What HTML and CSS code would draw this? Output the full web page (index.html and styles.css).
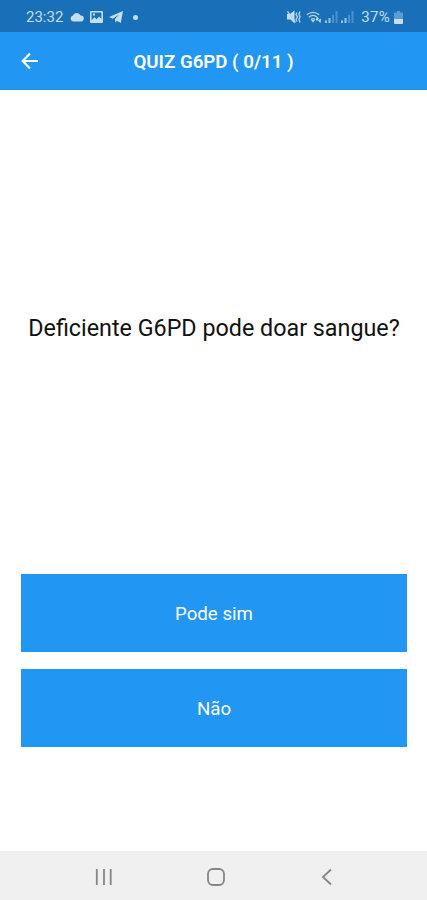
FILE: index.html
```
<!DOCTYPE html>
<html lang="pt-BR">
<head>
    <meta charset="UTF-8">
    <meta name="viewport" content="width=device-width, initial-scale=1.0">
    <title>Quiz G6PD</title>
    <link rel="stylesheet" href="styles.css">
</head>
<body>

    <div class="status-bar">
        <span class="clock">23:32</span>
        <svg class="cloud" width="14" height="10" viewBox="0 0 14 10">
            <path d="M3 9.500a3 3 0 0 1-.3-5.800A4.300 4.300 0 0 1 10.600 3.500 3 3 0 0 1 11 9.500z"/>
        </svg>
        <svg class="photo" width="13" height="12" viewBox="0 0 13 12">
            <path fill-rule="evenodd" d="M1 0h11a1 1 0 0 1 1 1v10a1 1 0 0 1-1 1H1a1 1 0 0 1-1-1V1a1 1 0 0 1 1-1zM1.600 1.600v7.600l2.800-3 2.200 2 2.600-2.700 2.200 2.500V1.600z"/>
            <path d="M3 2.500h2v2H3z"/>
        </svg>
        <svg class="telegram" width="14" height="12" viewBox="0 0 14 12">
            <path d="M14 0 0 6l3.800 1.800L10 3.500 6 8v3.500l1.800-1.700 4 2.200z"/>
        </svg>
        <span class="dot"></span>

        <div class="status-right">
            <svg class="mute" width="14" height="14" viewBox="0 0 14 14">
                <path d="M0 4h3l4.500-3.500v13L3.500 9.500H0z"/>
                <path class="line" d="M.5 1.500 8.500 12.500M10 2.500l-1 2 1.500 2.500-1.500 2.500 1 2M13 1.500l-1 2.500 1 3-1 2.500 1 3"/>
            </svg>
            <svg class="wifi" width="16" height="13" viewBox="0 0 16 13">
                <path class="line" d="M.8 3.800q6-5 12.400 0M2.800 6.200q4.200-3.500 8.400 0M5 8.500q2-1.700 4 0"/>
                <path d="M5 9h4l-2 2.500zM9.500 8.500l2-2.500 1.500 1.500-2 2.500zM12 9.500l3-2-.5 4.500z"/>
            </svg>
            <svg class="signal" width="13" height="12" viewBox="0 0 13 12">
                <path d="M0 9.500h2V12H0zM3.500 7h2v5h-2z"/>
                <path class="faint" d="M7 4h2v8H7zM10.500 0h2v12h-2z"/>
            </svg>
            <svg class="signal" width="13" height="12" viewBox="0 0 13 12">
                <path d="M0 9.500h2V12H0zM3.500 7h2v5h-2z"/>
                <path class="faint" d="M7 4h2v8H7zM10.500 0h2v12h-2z"/>
            </svg>
            <span class="percent">37%</span>
            <svg class="battery" width="9" height="13" viewBox="0 0 9 13">
                <path class="faint" d="M3 0h3v1.500h2a1 1 0 0 1 1 1V8H0V2.500a1 1 0 0 1 1-1h2z"/>
                <path d="M0 8h9v4a1 1 0 0 1-1 1H1a1 1 0 0 1-1-1z"/>
            </svg>
        </div>
    </div>

    <header class="app-bar">
        <button class="back-btn" aria-label="Voltar">
            <svg width="18" height="18" viewBox="0 0 18 18">
                <path d="M17 9H2M9 1.500 1.700 9 9 16.500"/>
            </svg>
        </button>
        <h1>QUIZ G6PD ( 0/11 )</h1>
    </header>

    <main>
        <p class="question">Deficiente G6PD pode doar sangue?</p>
        <div class="answers">
            <button class="answer-btn">Pode sim</button>
            <button class="answer-btn">Não</button>
        </div>
    </main>

    <nav class="nav-bar">
        <svg width="18" height="18" viewBox="0 0 18 18">
            <path d="M1.800 1v16M9 1v16M15.700 1v16"/>
        </svg>
        <svg width="18" height="18" viewBox="0 0 18 18">
            <rect x="1" y="1" width="16" height="16" rx="5"/>
        </svg>
        <svg width="18" height="18" viewBox="0 0 18 18">
            <path d="M13 1.500 5 9l8 7.500"/>
        </svg>
    </nav>

</body>
</html>
```
FILE: styles.css
```
* {
    box-sizing: border-box;
}
body {
    margin: 0;
    height: 900px;
    display: flex;
    flex-direction: column;
    font-family: Roboto, sans-serif;
    background-color: #fff;
}
button {
    border: none;
    padding: 0;
    font-family: inherit;
    color: white;
    cursor: pointer;
}
.status-bar {
    height: 32px;
    padding: 2px 24px 0 26px;
    display: flex;
    align-items: center;
    background-color: #1a70b8;
    color: #c3dff5;
    font-size: 15px;
}
.status-bar svg {
    fill: #c3dff5;
}
.status-bar .line {
    fill: none;
    stroke: #b4d5ef;
    stroke-width: 1.3;
}
.status-bar .faint {
    opacity: 0.4;
}
.clock {
    width: 44px;
}
.photo {
    margin-left: 6px;
}
.telegram {
    margin-left: 6px;
}
.dot {
    width: 5px;
    height: 5px;
    margin-left: 10px;
    border-radius: 50%;
    background-color: #c3dff5;
}
.status-right {
    margin-left: auto;
    display: flex;
    align-items: center;
}
.wifi {
    margin-left: 5px;
}
.signal {
    margin-left: 3px;
    opacity: 0.75;
}
.percent {
    margin: 0 4px 0 7px;
    letter-spacing: 0.3px;
}
.app-bar {
    height: 58px;
    display: grid;
    grid-template-columns: 60px 1fr 60px;
    align-items: center;
    background-color: #2196f3;
    border-bottom: 1px solid #1e90ec;
}
.back-btn {
    width: 60px;
    height: 56px;
    display: flex;
    align-items: center;
    justify-content: center;
    background: none;
}
.back-btn path {
    fill: none;
    stroke: white;
    stroke-width: 2.2;
}
.app-bar h1 {
    margin: 0;
    padding-top: 2px;
    font-size: 18.7px;
    font-weight: 600;
    color: white;
    text-align: center;
    white-space: nowrap;
}
main {
    flex: 1;
    padding: 0 20px 104px 21px;
    display: flex;
    flex-direction: column;
}
.question {
    flex: 1;
    margin: 0;
    display: flex;
    align-items: center;
    justify-content: center;
    padding-bottom: 8px;
    font-size: 23.3px;
    color: #111;
    white-space: nowrap;
}
.answers {
    display: flex;
    flex-direction: column;
    gap: 17px;
}
.answer-btn {
    height: 78px;
    padding-top: 2px;
    font-size: 18.7px;
    background-color: #2196f3;
}
.nav-bar {
    height: 49px;
    padding: 2px 91px 0 95px;
    display: flex;
    align-items: center;
    justify-content: space-between;
    background-color: #f0f0f0;
}
.nav-bar svg {
    fill: none;
    stroke: #858585;
    stroke-width: 1.8;
}
```
